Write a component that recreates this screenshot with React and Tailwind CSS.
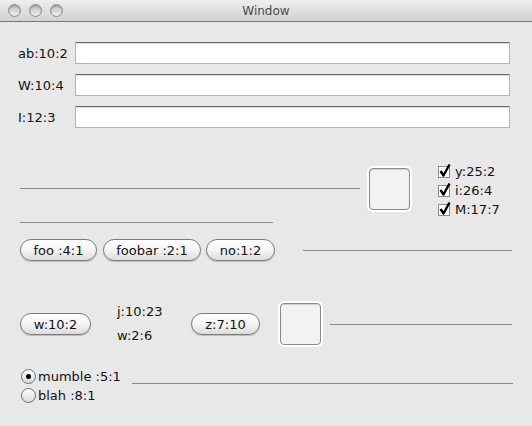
import React from "react";

const font = { fontFamily: '"DejaVu Sans", "Liberation Sans", sans-serif' };

const Light = () => (
  <div className="w-[13px] h-[13px] rounded-full border border-[#8e8e8e] bg-linear-to-b from-[#bdbdbd] to-[#f0f0f0] shadow-[inset_0_1px_2px_rgba(0,0,0,0.25)]" />
);

const Field = ({ label }) => (
  <div className="flex items-center h-[22px]">
    <span className="w-[57px] shrink-0 text-[13px] text-[#111] leading-none">{label}</span>
    <div className="w-[435px] shrink-0 h-[22px] bg-white border border-[#b4b4b4] border-t-[#6e6e6e] shadow-[inset_0_1px_0_#dcdcdc]" />
  </div>
);

const Pill = ({ label, w }) => (
  <button
    className={`${w} shrink-0 h-[22px] rounded-full border border-[#7c7c7c] bg-linear-to-b from-white via-[#f5f5f5] to-[#dcdcdc] shadow-[0_1px_1px_rgba(0,0,0,0.2)] text-[13px] leading-none text-[#111] flex items-center justify-center`}
  >
    {label}
  </button>
);

const Square = () => (
  <div className="w-[45px] h-[46px] shrink-0 rounded-[6px] bg-white p-[2px]">
    <div className="w-full h-full rounded-[4px] border border-[#8a8a8a] bg-[#f2f2f2] shadow-[inset_0_1px_1px_rgba(0,0,0,0.15)]" />
  </div>
);

const Check = ({ label }) => (
  <div className="flex items-center h-[19px]">
    <svg width="16" height="16" viewBox="0 0 16 16" className="shrink-0">
      <rect x="0.5" y="4.5" width="11" height="11" fill="#fff" stroke="#8c8c8c" />
      <path d="M2.5 9 L5.5 13.5 L11.5 2.5" fill="none" stroke="#000" strokeWidth="2.4" strokeLinejoin="round" />
    </svg>
    <span className="ml-[1px] text-[13px] leading-none text-[#111] mt-[3px]">{label}</span>
  </div>
);

const Radio = ({ label, on }) => (
  <div className="flex items-center h-[19px]">
    <div className="w-[15px] h-[15px] shrink-0 rounded-full border border-[#6f6f6f] bg-linear-to-b from-white to-[#dadada] flex items-center justify-center">
      {on && <div className="w-[5px] h-[5px] rounded-full bg-black" />}
    </div>
    <span className="ml-[2px] text-[13px] leading-none text-[#111]">{label}</span>
  </div>
);

const Line = ({ w, cls = "" }) => <div className={`${w} shrink-0 h-px bg-[#8a8a8a] ${cls}`} />;

export default function App() {
  return (
    <div style={font} className="w-[532px] h-[426px] bg-[#e8e8e8] overflow-hidden">
      <div className="relative h-[22px] flex items-center px-[8px] gap-[8px] bg-linear-to-b from-[#eeeeee] to-[#d2d2d2] border-b border-[#777]">
        <Light />
        <Light />
        <Light />
        <span className="absolute inset-x-0 text-center text-[12px] text-[#4a4a4a] pointer-events-none">
          Window
        </span>
      </div>

      <div className="pl-[18px] pt-[20px] flex flex-col gap-[10px]">
        <Field label="ab:10:2" />
        <Field label="W:10:4" />
        <Field label="I:12:3" />
      </div>

      <div className="pl-[20px] mt-[35px] h-[59px] flex items-start">
        <Line w="w-[340px]" cls="mt-[25px]" />
        <div className="ml-[7px] mt-[3px] shrink-0">
          <Square />
        </div>
        <div className="ml-[26px] -mt-[3px] flex flex-col shrink-0">
          <Check label="y:25:2" />
          <Check label="i:26:4" />
          <Check label="M:17:7" />
        </div>
      </div>

      <Line w="w-[253px]" cls="ml-[20px]" />

      <div className="pl-[20px] mt-[16px] flex items-center">
        <Pill label="foo :4:1" w="w-[77px]" />
        <div className="ml-[6px] shrink-0">
          <Pill label="foobar :2:1" w="w-[98px]" />
        </div>
        <div className="ml-[5px] shrink-0">
          <Pill label="no:1:2" w="w-[69px]" />
        </div>
        <Line w="w-[209px]" cls="ml-[28px]" />
      </div>

      <div className="pl-[20px] mt-[40px] h-[46px] flex items-center">
        <Pill label="w:10:2" w="w-[71px]" />
        <div className="ml-[26px] w-[45px] shrink-0 flex flex-col gap-[10px] text-[13px] leading-[14px] text-[#111]">
          <span>j:10:23</span>
          <span>w:2:6</span>
        </div>
        <div className="ml-[29px] shrink-0">
          <Pill label="z:7:10" w="w-[69px]" />
        </div>
        <div className="ml-[18px] shrink-0">
          <Square />
        </div>
        <Line w="w-[182px]" cls="ml-[7px]" />
      </div>

      <div className="pl-[21px] mt-[20px] flex items-start">
        <div className="flex flex-col shrink-0">
          <Radio label="mumble :5:1" on />
          <Radio label="blah :8:1" />
        </div>
        <Line w="w-[381px]" cls="ml-[11px] mt-[16px]" />
      </div>
    </div>
  );
}
